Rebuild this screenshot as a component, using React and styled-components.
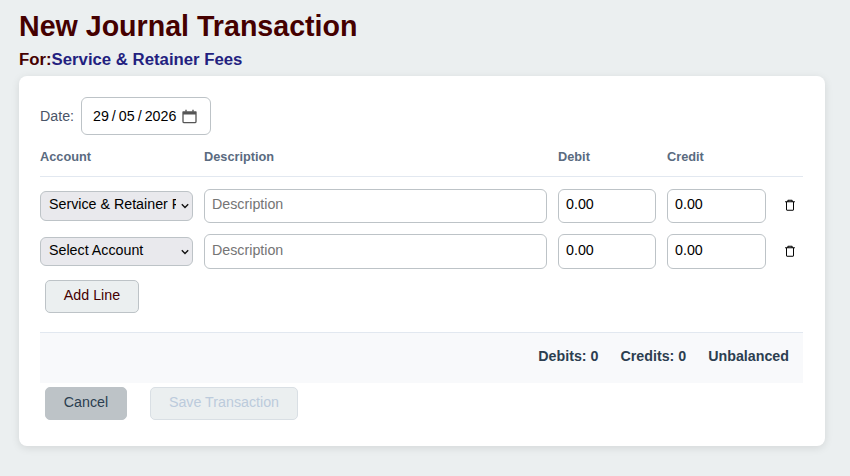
import React from "react";
import styled, { createGlobalStyle } from "styled-components";

const Global = createGlobalStyle`
  html, body { margin: 0; padding: 0; background: #ebeff0; }
  body { font-family: "Liberation Sans", Arial, sans-serif; color: #000; }
  * { box-sizing: border-box; }
`;

const Page = styled.main`
  width: 850px;
  height: 476px;
  padding: 10px 25px 0 19px;
  overflow: hidden;
`;
const Title = styled.h1`
  margin: 0;
  font-size: 28.6px;
  line-height: 33px;
  font-weight: 700;
  color: #450000;
`;
const Subtitle = styled.h2`
  margin: 8px 0 0;
  font-size: 16.75px;
  line-height: 18px;
  font-weight: 700;
  color: #450000;
`;
const Account = styled.span`
  color: #231f80;
`;
const Card = styled.section`
  margin-top: 7px;
  height: 370px;
  padding: 21px 22px 0 21px;
  background: #fff;
  border-radius: 8px;
  box-shadow: 0 2px 8px rgba(0, 0, 0, 0.1);
`;
const DateRow = styled.div`
  display: flex;
  align-items: center;
  gap: 7px;
  height: 38px;
`;
const DateLabel = styled.label`
  width: 34px;
  font-size: 14.25px;
  color: #4a5568;
`;
const DateField = styled.div`
  width: 130px;
  height: 38px;
  padding: 0 13px 0 11px;
  display: flex;
  align-items: center;
  justify-content: space-between;
  border: 1px solid #bdc3c7;
  border-radius: 6px;
  font-size: 14.25px;
  background: #fff;
`;
const DateParts = styled.span`
  display: flex;
  gap: 3px;
`;
const Columns = styled.div`
  display: grid;
  grid-template-columns: 153px 343px 98px 99px 26px;
  column-gap: 11px;
  align-items: center;
`;
const HeadRow = styled(Columns)`
  height: 42px;
  padding-top: 3px;
  border-bottom: 1px solid #e2e8f0;
  margin-bottom: 12px;
  padding-bottom: 1px;
`;
const HeadCell = styled.span`
  font-size: 12.75px;
  font-weight: 700;
  color: #5a6b80;
`;
const LineRow = styled(Columns)`
  height: ${(p) => p.$h}px;
  margin-bottom: ${(p) => p.$gap}px;
`;
const SelectWrap = styled.span`
  position: relative;
  display: block;
  width: 153px;
  height: ${(p) => p.$h}px;
  color: #000;
`;
const AccountSelect = styled.select`
  appearance: none;
  display: block;
  width: 100%;
  height: 100%;
  padding: 0 16px ${(p) => p.$lift}px 8px;
  border: 1px solid #bdc3c7;
  border-radius: 6px;
  background-color: #e9e9ed;
  font-family: "Liberation Sans", Arial, sans-serif;
  font-size: 14.25px;
  color: #000;
`;
const SelectChevron = styled.svg`
  position: absolute;
  right: 4px;
  top: 50%;
  margin-top: -3px;
  pointer-events: none;
`;
const TextInput = styled.input`
  width: 100%;
  height: ${(p) => p.$h}px;
  padding: 0 7px 4px;
  border: 1px solid #bdc3c7;
  border-radius: 6px;
  background: #fff;
  font-family: "Liberation Sans", Arial, sans-serif;
  font-size: 14.25px;
  color: #000;
  &::placeholder { color: #757575; opacity: 1; }
`;
const TrashButton = styled.button`
  width: 26px;
  height: 24px;
  margin-bottom: 2px;
  padding: 0;
  border: 0;
  background: transparent;
  display: flex;
  align-items: center;
  justify-content: center;
`;
const Button = styled.button`
  height: 33px;
  border-radius: 5px;
  font-family: "Liberation Sans", Arial, sans-serif;
  font-size: 14.25px;
  padding: 0 0 3px;
  text-align: center;
`;
const AddLine = styled(Button)`
  display: block;
  width: 94px;
  margin-left: 5px;
  border: 1px solid #bdc3c7;
  background: #ebeff0;
  color: #450000;
`;
const Totals = styled.div`
  margin-top: 19px;
  height: 51px;
  padding: 0 14px 4px 0;
  display: flex;
  align-items: center;
  justify-content: flex-end;
  gap: 22px;
  background: #f8f9fb;
  border-top: 1px solid #e2e8f0;
  font-size: 14.25px;
  font-weight: 700;
  color: #2c3e50;
`;
const Actions = styled.div`
  display: flex;
  gap: 23px;
  margin: 4px 0 0 5px;
`;
const Cancel = styled(Button)`
  width: 82px;
  border: 1px solid #bdc3c7;
  background: #bdc3c7;
  color: #2c3e50;
`;
const Save = styled(Button)`
  width: 148px;
  border: 1px solid #d9dfe4;
  background: #ebeff0;
  color: #bccbdc;
`;

const Trash = () => (
  <svg width="12" height="12" viewBox="0 0 16 16" fill="currentColor" color="#000">
    <path d="M5.5 1a1 1 0 0 0-1 1v1H1.5v1.3h1.2V14a1.5 1.5 0 0 0 1.5 1.5h7.6a1.5 1.5 0 0 0 1.5-1.5V4.3h1.2V3h-3V2a1 1 0 0 0-1-1h-5zm.3 1.2h4.4V3H5.8v-.8zM4 4.3h8V14a.2.2 0 0 1-.2.2H4.2A.2.2 0 0 1 4 14V4.3z" />
  </svg>
);

const Calendar = () => (
  <svg width="15" height="15" viewBox="0 0 15 15" fill="none">
    <path d="M1 3.2h13v9.3a1.2 1.2 0 0 1-1.2 1.2H2.2A1.2 1.2 0 0 1 1 12.5V3.2z" stroke="#555" strokeWidth="1.3" />
    <path d="M1 2.5h13v3H1z" fill="#555" />
    <path d="M4 .8v2M11 .8v2" stroke="#555" strokeWidth="1.4" />
  </svg>
);

const Line = ({ value, selectHeight, inputHeight, gap, lift }) => (
  <LineRow $h={inputHeight} $gap={gap}>
    <SelectWrap $h={selectHeight}>
      <AccountSelect $lift={lift} defaultValue={value} aria-label="Account">
        <option>Select Account</option>
        <option>Service &amp; Retainer Fees</option>
      </AccountSelect>
      <SelectChevron width="8" height="6" viewBox="0 0 8 6" fill="none">
        <path d="M.8 1.2 4 4.4l3.2-3.2" stroke="#111" strokeWidth="1.4" />
      </SelectChevron>
    </SelectWrap>
    <TextInput $h={inputHeight} placeholder="Description" />
    <TextInput $h={inputHeight} defaultValue="0.00" />
    <TextInput $h={inputHeight} defaultValue="0.00" />
    <TrashButton aria-label="Delete line"><Trash /></TrashButton>
  </LineRow>
);

export default function App() {
  return (
    <>
      <Global />
      <Page>
        <Title>New Journal Transaction</Title>
        <Subtitle>For:<Account>Service &amp; Retainer Fees</Account></Subtitle>
        <Card>
          <DateRow>
            <DateLabel>Date:</DateLabel>
            <DateField>
              <DateParts><span>29</span><span>/</span><span>05</span><span>/</span><span>2026</span></DateParts>
              <Calendar />
            </DateField>
          </DateRow>
          <HeadRow>
            <HeadCell>Account</HeadCell>
            <HeadCell>Description</HeadCell>
            <HeadCell>Debit</HeadCell>
            <HeadCell>Credit</HeadCell>
          </HeadRow>
          <Line value="Service & Retainer Fees" selectHeight={30} inputHeight={34} gap={11} lift={5} />
          <Line value="Select Account" selectHeight={29} inputHeight={35} gap={11} lift={3} />
          <AddLine>Add Line</AddLine>
          <Totals>
            <span>Debits: 0</span>
            <span>Credits: 0</span>
            <span>Unbalanced</span>
          </Totals>
          <Actions>
            <Cancel>Cancel</Cancel>
            <Save disabled>Save Transaction</Save>
          </Actions>
        </Card>
      </Page>
    </>
  );
}
